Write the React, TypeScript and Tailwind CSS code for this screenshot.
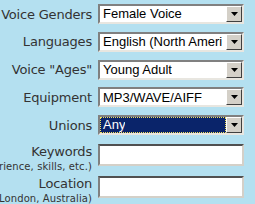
import React from 'react';

const label = "font-['DejaVu_Sans',Verdana,sans-serif] text-[13px] leading-[15px] text-[#333333] tracking-[-0.2px]";
const sub = "whitespace-nowrap font-['DejaVu_Sans',Verdana,sans-serif] text-[10px] leading-[11px] text-[#333333] tracking-[0.1px]";

function Arrow() {
  return (
    <div className="w-[16px] h-[16px] bg-[#d4d0c8] border border-t-white border-l-white border-r-[#404040] border-b-[#404040] flex items-center justify-center shrink-0">
      <svg width="7" height="4" viewBox="0 0 7 4"><path d="M0 0h7L3.5 4z" fill="#000" /></svg>
    </div>
  );
}

function Select({ value, active }: { value: string; active?: boolean }) {
  return (
    <div className="w-[146px] h-[20px] bg-white border-2 border-t-[#808080] border-l-[#808080] border-r-[#e8e6e0] border-b-[#e8e6e0] flex items-center">
      <div className={`flex-1 min-w-0 h-full flex items-center ${active ? 'bg-[#0a246a] text-white outline outline-1 outline-dotted outline-[#f0e060] -outline-offset-1' : 'text-black'}`}>
        <span className="pl-[3px] font-['Liberation_Sans',Arial,sans-serif] text-[13px] whitespace-nowrap overflow-hidden">{value}</span>
      </div>
      <Arrow />
    </div>
  );
}

function TextBox() {
  return <div className="w-[146px] h-[22px] bg-white border-2 border-t-[#505050] border-l-[#808080] border-r-[#d4d0c8] border-b-[#d4d0c8]" />;
}

const selects: [string, string, boolean?][] = [
  ['Voice Genders', 'Female Voice'],
  ['Languages', 'English (North Ameri'],
  ['Voice "Ages"', 'Young Adult'],
  ['Equipment', 'MP3/WAVE/AIFF'],
  ['Unions', 'Any', true],
];

function TextRow({ title, hint, className }: { title: string; hint: string; className: string }) {
  return (
    <div className={`flex items-start ${className}`}>
      <div className="w-[93px] h-[22px] flex flex-col items-end pr-[1px]">
        <div className={`${label} leading-[16px]`}>{title}</div>
        <div className="w-full flex justify-end mt-[1px]">
          <span className={sub}>{hint}</span>
        </div>
      </div>
      <div className="ml-[5px]"><TextBox /></div>
    </div>
  );
}

export default function App() {
  return (
    <div className="w-[255px] h-[204px] bg-[#b4e0f0] overflow-hidden pt-[4px]">
      <div className="flex flex-col gap-[7.75px]">
        {selects.map(([l, v, a]) => (
          <div key={l} className="flex items-center">
            <div className={`w-[93px] text-right pr-[1px] ${label}`}>{l}</div>
            <div className="ml-[5px]"><Select value={v} active={a} /></div>
          </div>
        ))}
      </div>
      <TextRow title="Keywords" hint="(experience, skills, etc.)" className="mt-[9px]" />
      <TextRow title="Location" hint="(e.g. London, Australia)" className="mt-[10px]" />
    </div>
  );
}
